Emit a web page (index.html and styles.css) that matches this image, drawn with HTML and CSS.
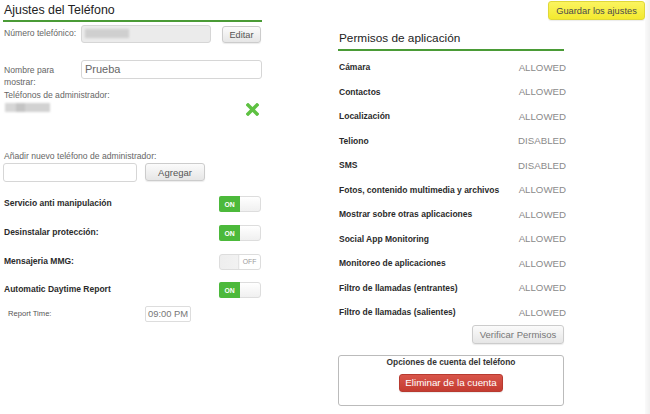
FILE: index.html
```html
<!DOCTYPE html>
<html lang="es">
<head>
    <meta charset="UTF-8">
    <title>Ajustes del Teléfono</title>
    <link rel="stylesheet" href="styles.css">
</head>
<body>
<div class="page">
    <div class="main">
        <!-- Left column: phone settings -->
        <div class="settings">
            <h2 class="title">Ajustes del Teléfono</h2>

            <div class="row phone">
                <span class="label">Número telefónico:</span>
                <div class="input disabled"><span class="blur wide"></span></div>
                <button class="btn edit">Editar</button>
            </div>

            <div class="row name">
                <span class="label two">Nombre para mostrar:</span>
                <div class="input full">Prueba</div>
            </div>

            <div class="label admin">Teléfonos de administrador:</div>
            <div class="admin-row">
                <span class="blur small"></span>
                <svg class="remove" width="13" height="13" viewBox="0 0 13 13">
                    <path d="M2 2 L11 11 M11 2 L2 11" stroke="#5ec142" stroke-width="3.4" stroke-linecap="square"/>
                </svg>
            </div>

            <div class="label add">Añadir nuevo teléfono de administrador:</div>
            <div class="row add-row">
                <div class="input new"></div>
                <button class="btn add-btn">Agregar</button>
            </div>

            <div class="toggles">
                <div class="toggle-row">
                    <span class="tlabel">Servicio anti manipulación</span>
                    <span class="toggle on"><span class="knob">ON</span></span>
                </div>
                <div class="toggle-row">
                    <span class="tlabel">Desinstalar protección:</span>
                    <span class="toggle on"><span class="knob">ON</span></span>
                </div>
                <div class="toggle-row">
                    <span class="tlabel">Mensajeria MMG:</span>
                    <span class="toggle off"><span class="knob">OFF</span></span>
                </div>
                <div class="toggle-row">
                    <span class="tlabel">Automatic Daytime Report</span>
                    <span class="toggle on"><span class="knob">ON</span></span>
                </div>
            </div>
            <div class="report">
                <span class="rlabel">Report Time:</span>
                <span class="time">09:00 PM</span>
            </div>
        </div>

        <!-- Right column: permissions -->
        <div class="side">
            <div class="toolbar">
                <button class="btn save">Guardar los ajustes</button>
            </div>
            <div class="perms">
                <h3 class="ptitle">Permisos de aplicación</h3>
                <div class="perm-list">
                    <div class="perm"><span>Cámara</span><span class="state">ALLOWED</span></div>
                    <div class="perm"><span>Contactos</span><span class="state">ALLOWED</span></div>
                    <div class="perm"><span>Localización</span><span class="state">ALLOWED</span></div>
                    <div class="perm"><span>Teliono</span><span class="state">DISABLED</span></div>
                    <div class="perm"><span>SMS</span><span class="state">DISABLED</span></div>
                    <div class="perm"><span>Fotos, contenido multimedia y archivos</span><span class="state">ALLOWED</span></div>
                    <div class="perm"><span>Mostrar sobre otras aplicaciones</span><span class="state">ALLOWED</span></div>
                    <div class="perm"><span>Social App Monitoring</span><span class="state">ALLOWED</span></div>
                    <div class="perm"><span>Monitoreo de aplicaciones</span><span class="state">ALLOWED</span></div>
                    <div class="perm"><span>Filtro de llamadas (entrantes)</span><span class="state">ALLOWED</span></div>
                    <div class="perm"><span>Filtro de llamadas (salientes)</span><span class="state">ALLOWED</span></div>
                </div>
                <div class="verify-row">
                    <button class="btn verify">Verificar Permisos</button>
                </div>
                <div class="account">
                    <div class="atitle">Opciones de cuenta del teléfono</div>
                    <button class="btn danger">Eliminar de la cuenta</button>
                </div>
            </div>
        </div>
    </div>
    <div class="edge"></div>
</div>
</body>
</html>
```

FILE: styles.css
```css
:root{
    --green:      #4a9b36;
    --toggleOn:   #4cb93b;
    --label:      #666;
    --dark:       #2b2b2b;
    --state:      #8a8a8a;
}

body {
    margin: 0;
    background: #fff;
    font-family: "Liberation Sans", Arial, sans-serif;
    color: var(--dark);
}

.page {
    display: flex;
    width: 650px;
    height: 414px;
    overflow: hidden;
}

.main {
    display: flex;
    width: 645px;
}

.edge {
    width: 5px;
    background: linear-gradient(to right, #fafafa, #f0f0f0);
}

/* ---------- left column ---------- */

.settings {
    width: 259px;
    margin-left: 3px;
}

.title {
    margin: 0;
    padding: 3px 0 2px 1px;
    font-size: 12.4px;
    line-height: 15px;
    font-weight: normal;
    color: #222;
    border-bottom: 2px solid var(--green);
}

.row {
    display: flex;
    align-items: flex-start;
}

.label {
    font-size: 8.6px;
    line-height: 12px;
    color: var(--label);
    white-space: nowrap;
}

.row .label {
    width: 77px;
    padding-left: 1px;
}

.row .label.two {
    white-space: normal;
    width: 52px;
    margin-right: 25px;
}

.phone {
    margin-top: 3px;
}

.phone .label {
    padding-top: 2px;
}

.input {
    box-sizing: border-box;
    border: 1px solid #d6d6d6;
    border-radius: 3px;
    background: #fff;
    font-size: 11px;
    color: #666;
}

.input.disabled {
    width: 130px;
    height: 18px;
    background: #ebebeb;
    padding: 3px 0 0 3px;
}

.blur {
    display: block;
    height: 9px;
    background: #cfcfcf;
    filter: blur(1px);
}

.blur.wide {
    width: 44px;
}

.blur.small {
    width: 45px;
    margin-left: 2px;
    margin-top: 2px;
    background: linear-gradient(to right, #d6d6d6 0, #d6d6d6 25%, #c4c4c4 25%, #c4c4c4 45%, #d2d2d2 45%);
}

.btn {
    box-sizing: border-box;
    font-family: "Liberation Sans", Arial, sans-serif;
    border: 1px solid #ccc;
    border-radius: 3px;
    background: linear-gradient(#fbfbfb, #e6e6e6);
    color: #555;
    font-size: 9.2px;
    padding: 0;
    box-shadow: 0 1px 1px rgba(0,0,0,0.08);
    white-space: nowrap;
}

.edit {
    width: 39px;
    height: 17px;
    margin-left: 11px;
    margin-top: 1px;
}

.name {
    margin-top: 17px;
}

.name .label {
    padding-top: 4px;
}

.input.full {
    width: 181px;
    height: 19px;
    padding: 2px 0 0 3px;
}

.label.admin {
    margin-top: 1px;
    padding-left: 1px;
}

.admin-row {
    display: flex;
    justify-content: space-between;
    align-items: flex-start;
    height: 49px;
}

.remove {
    margin-right: 3px;
    margin-top: 2px;
}

.label.add {
    padding-left: 1px;
}

.add-row {
    margin-top: 1px;
    gap: 8px;
    height: 27px;
}

.input.new {
    width: 134px;
    height: 19px;
}

.add-btn {
    width: 60px;
    height: 18px;
    font-size: 9.5px;
}

.toggle-row {
    display: flex;
    justify-content: space-between;
    align-items: center;
    height: 28.7px;
}

.tlabel {
    font-size: 8.5px;
    font-weight: bold;
    color: var(--dark);
    padding-left: 1px;
    margin-top: -2px;
}

.toggle {
    box-sizing: border-box;
    display: flex;
    width: 42px;
    height: 16px;
    border: 1px solid #ddd;
    border-radius: 3px;
    background: linear-gradient(#fff, #f0f0f0);
    margin-right: 1px;
}

.knob {
    display: flex;
    align-items: center;
    justify-content: center;
    width: 21px;
    font-size: 6.8px;
    font-weight: bold;
}

.toggle.on .knob {
    background: var(--toggleOn);
    color: #fff;
    border-radius: 2px 0 0 2px;
    margin: -1px 0 -1px -1px;
}

.toggle.off {
    justify-content: flex-end;
    background: linear-gradient(to right, #eee 0, #f2f2f2 48%, #fff 50%);
}

.toggle.off .knob {
    color: #999;
    font-weight: normal;
    border-left: 1px solid #e4e4e4;
}

.report {
    display: flex;
    align-items: center;
    margin-top: 1px;
}

.rlabel {
    width: 137px;
    padding-left: 5px;
    font-size: 7.6px;
    color: #555;
}

.time {
    box-sizing: border-box;
    width: 46px;
    height: 16px;
    border: 1px solid #ddd;
    border-radius: 2px;
    font-size: 9.4px;
    line-height: 14px;
    padding-left: 2px;
    color: #777;
    white-space: nowrap;
}

/* ---------- right column ---------- */

.side {
    flex: 1;
    margin-left: 76px;
}

.toolbar {
    display: flex;
    justify-content: flex-end;
    padding-top: 1px;
}

.save {
    width: 97px;
    height: 19px;
    background: linear-gradient(#fbf460, #f3e92e);
    border-color: #e0d838;
    color: #4a4a4a;
    font-size: 9.3px;
}

.perms {
    width: 226px;
    margin-top: 10px;
}

.ptitle {
    margin: 0;
    padding: 1px 0 4px 1px;
    font-size: 11.8px;
    line-height: 14px;
    font-weight: normal;
    color: #222;
    border-bottom: 2px solid var(--green);
}

.perm-list {
    margin-top: 4px;
}

.perm {
    display: flex;
    justify-content: space-between;
    align-items: center;
    height: 24.5px;
    font-size: 8.5px;
    font-weight: bold;
    padding-left: 1px;
}

.state {
    font-size: 9.7px;
    font-weight: normal;
    color: var(--state);
    margin-right: -2px;
}

.verify-row {
    display: flex;
    justify-content: flex-end;
}

.verify {
    width: 92px;
    height: 19px;
    font-size: 9.5px;
    color: #777;
}

.account {
    box-sizing: border-box;
    margin-top: 11px;
    height: 51px;
    border: 1px solid #bbb;
    border-radius: 3px;
    text-align: center;
}

.atitle {
    font-size: 8.4px;
    font-weight: bold;
    color: #333;
    padding-top: 1px;
}

.danger {
    width: 104px;
    height: 18px;
    margin-top: 7px;
    border-color: #b83a30;
    background: linear-gradient(#d8554a, #c43c31);
    color: #fff;
    font-size: 9.8px;
}
```
